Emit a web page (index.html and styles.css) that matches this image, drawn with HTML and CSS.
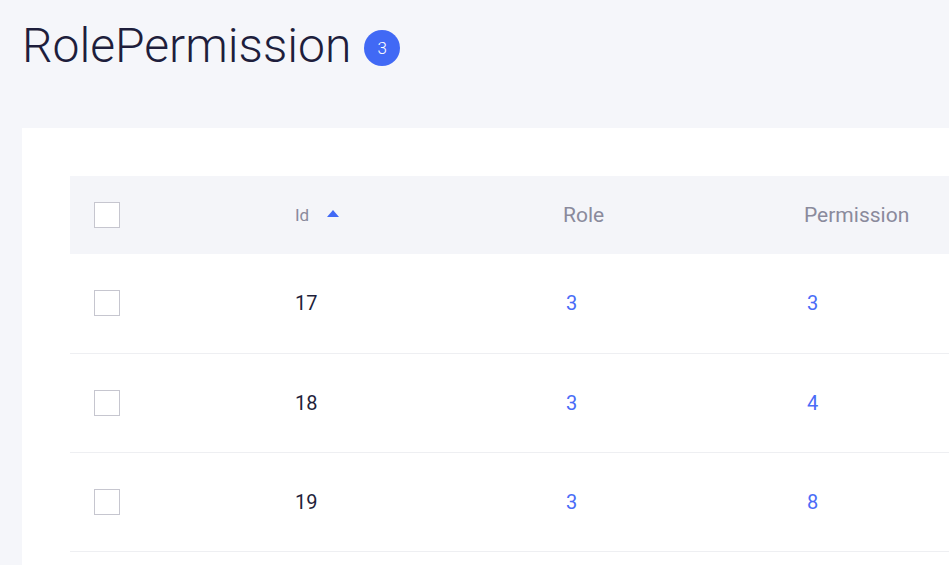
FILE: index.html
```html
<!DOCTYPE html>
<html lang="en">
<head>
    <meta charset="UTF-8">
    <meta name="viewport" content="width=device-width, initial-scale=1.0">
    <title>RolePermission</title>
    <link rel="stylesheet" href="styles.css">
</head>
<body>
    <div class="page">
        <div class="page-header">
            <h1 class="page-title">RolePermission</h1>
            <span class="count-badge">3</span>
        </div>
        <div class="card">
            <table class="data-table">
                <colgroup>
                    <col class="col-check">
                    <col class="col-id">
                    <col class="col-role">
                    <col class="col-perm">
                    <col>
                </colgroup>
                <thead>
                    <tr>
                        <th><span class="checkbox"></span></th>
                        <th class="th-id">Id <span class="sort-up"></span></th>
                        <th>Role</th>
                        <th>Permission</th>
                        <th></th>
                    </tr>
                </thead>
                <tbody>
                    <tr>
                        <td><span class="checkbox"></span></td>
                        <td>17</td>
                        <td><a href="#">3</a></td>
                        <td><a href="#">3</a></td>
                        <td></td>
                    </tr>
                    <tr>
                        <td><span class="checkbox"></span></td>
                        <td>18</td>
                        <td><a href="#">3</a></td>
                        <td><a href="#">4</a></td>
                        <td></td>
                    </tr>
                    <tr>
                        <td><span class="checkbox"></span></td>
                        <td>19</td>
                        <td><a href="#">3</a></td>
                        <td><a href="#">8</a></td>
                        <td></td>
                    </tr>
                </tbody>
            </table>
        </div>
    </div>
</body>
</html>
```

FILE: styles.css
```css
html, body {
    margin: 0;
    height: 100%;
    overflow: hidden;
}
body {
    background: #f5f6fa;
    font-family: Roboto, "Liberation Sans", sans-serif;
    color: #1f1f3b;
}
.page {
    padding: 18px 0 0 22px;
}
.page-header {
    display: flex;
    align-items: center;
    gap: 13px;
    height: 56px;
}
.page-title {
    margin: 0;
    font-size: 48px;
    font-weight: 300;
    line-height: 56px;
    color: #1e1e3c;
}
.count-badge {
    display: flex;
    align-items: center;
    justify-content: center;
    width: 36px;
    height: 36px;
    border-radius: 50%;
    background: #4169f5;
    color: #fff;
    font-size: 17px;
    font-weight: 300;
    margin-top: 4px;
}
.card {
    margin-top: 54px;
    background: #fff;
    padding: 48px 0 0 48px;
    min-height: 500px;
}
.data-table {
    width: 1100px;
    border-collapse: collapse;
    table-layout: fixed;
}
.col-check { width: 201px; }
.col-id { width: 268px; }
.col-role { width: 241px; }
.col-perm { width: 260px; }
.data-table th,
.data-table td {
    padding: 0 0 0 24px;
    text-align: left;
    vertical-align: middle;
}
.data-table thead tr {
    background: #f4f5f9;
    height: 78px;
}
.data-table th {
    font-size: 21px;
    font-weight: 400;
    color: #8a8a9c;
}
.data-table th.th-id {
    font-size: 17px;
}
.sort-up {
    display: inline-block;
    width: 0;
    height: 0;
    margin-left: 14px;
    border-left: 6px solid transparent;
    border-right: 6px solid transparent;
    border-bottom: 7px solid #4169f5;
    vertical-align: 4px;
}
.data-table tbody tr {
    height: 99px;
    border-bottom: 1px solid #eeeff2;
}
.data-table td {
    font-size: 20px;
    color: #1f1f3b;
}
.data-table a {
    color: #4a6cf7;
    text-decoration: none;
    padding-left: 3px;
}
.checkbox {
    display: block;
    width: 24px;
    height: 24px;
    border: 1px solid #c6c6cf;
    background: #fff;
}
```
